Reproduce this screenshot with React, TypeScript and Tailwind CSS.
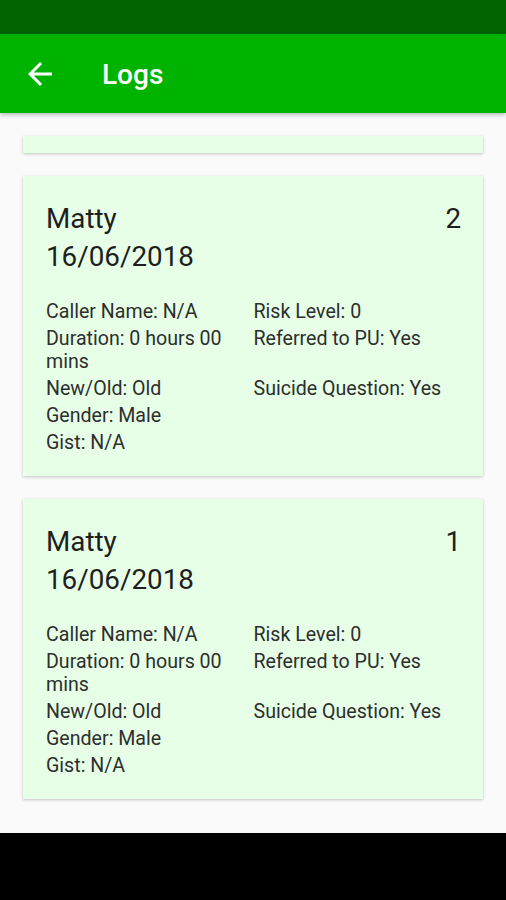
import React from 'react';

type Log = {
  id: number;
  name: string;
  date: string;
};

const logs: Log[] = [
  { id: 2, name: 'Matty', date: '16/06/2018' },
  { id: 1, name: 'Matty', date: '16/06/2018' },
];

const LogCard: React.FC<{ log: Log }> = ({ log }) => {
  return (
    <div className="bg-[#e6ffe6] shadow-[0_1px_3px_rgba(0,0,0,0.22)] pt-[24px] pb-[22px] pl-[23px] pr-[22px]">
      <div className="flex justify-between text-[27.8px] leading-[38px] text-[#1e1e1e]">
        <div>
          <div>{log.name}</div>
          <div>{log.date}</div>
        </div>
        <div>{log.id}</div>
      </div>

      {/* details */}
      <div className="grid grid-cols-2 gap-y-[4px] mt-[24px] text-[19.6px] leading-[23px] text-[#2e2e2e]">
        <div>Caller Name: N/A</div>
        <div>Risk Level: 0</div>
        <div className="pr-[10px]">Duration: 0 hours 00 mins</div>
        <div>Referred to PU: Yes</div>
        <div>New/Old: Old</div>
        <div>Suicide Question: Yes</div>
        <div>Gender: Male</div>
        <div></div>
        <div>Gist: N/A</div>
        <div></div>
      </div>
    </div>
  );
};

export default function App() {
  return (
    <div className="w-[506px] h-[900px] flex flex-col overflow-hidden font-['Roboto',sans-serif]">
      {/* status bar */}
      <div className="h-[34px] bg-[#016401] shrink-0"></div>

      {/* app bar */}
      <div className="h-[79px] bg-[#01b301] shrink-0 flex items-center relative z-10 shadow-[0_2px_4px_rgba(0,0,0,0.25)]">
        <div className="w-[80px] flex items-center justify-center">
          <svg className="w-[36px] h-[36px] text-white" viewBox="0 0 24 24" fill="currentColor">
            <path d="M20 11H7.83l5.59-5.59L12 4l-8 8 8 8 1.41-1.41L7.83 13H20v-2z" />
          </svg>
        </div>
        <h1 className="ml-[22px] mt-[2px] text-white text-[28px] font-medium">Logs</h1>
      </div>

      {/* list */}
      <div className="flex-1 bg-[#fafafa] overflow-hidden px-[23px] pt-[23px] flex flex-col gap-[23px]">
        <div className="h-[17px] shrink-0 bg-[#e6ffe6] shadow-[0_1px_3px_rgba(0,0,0,0.22)]"></div>
        {logs.map((log) => (
          <LogCard key={log.id} log={log} />
        ))}
      </div>

      {/* nav bar */}
      <div className="h-[67px] bg-black shrink-0"></div>
    </div>
  );
}
